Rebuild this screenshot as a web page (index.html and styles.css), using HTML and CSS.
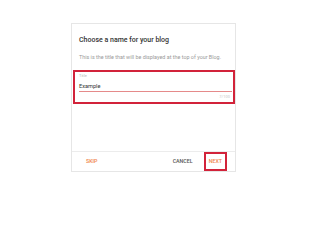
FILE: index.html
```html
<!DOCTYPE html>
<html>
<head>
<meta charset="utf-8">
<link rel="stylesheet" href="styles.css">
</head>
<body>
<div class="card">
  <div class="main">
    <div class="title">Choose a name for your blog</div>
    <div class="subtitle">This is the title that will be displayed at the top of your Blog.</div>
    <div class="field">
      <div class="label">Title</div>
      <div class="input">Example</div>
      <div class="counter">7/100</div>
    </div>
  </div>
  <div class="footer">
    <span class="btn skip">SKIP</span>
    <span class="spacer"></span>
    <span class="btn cancel">CANCEL</span>
    <span class="btn next">NEXT</span>
  </div>
</div>
</body>
</html>
```
FILE: styles.css
```css
html, body {
  margin: 0;
  padding: 0;
  background: #ffffff;
  font-family: Roboto, "Liberation Sans", sans-serif;
}
.card {
  margin: 23px 0 0 71px;
  width: 165px;
  height: 149px;
  box-sizing: border-box;
  border: 1px solid #e6e6e6;
  display: flex;
  flex-direction: column;
}
.main {
  height: 127px;
  box-sizing: border-box;
  padding: 11px 0 0 1px;
}
.title {
  font-size: 7px;
  line-height: 10px;
  font-weight: 500;
  color: #333333;
  padding-left: 6px;
  white-space: nowrap;
}
.subtitle {
  margin-top: 8px;
  font-size: 5.4px;
  line-height: 8px;
  color: #9a9a9a;
  padding-left: 6px;
  white-space: nowrap;
}
.field {
  margin-top: 9px;
  height: 34px;
  box-sizing: border-box;
  border: 2px solid #d2233a;
  padding: 1px 1px 0 4px;
}
.label {
  font-size: 4px;
  line-height: 5px;
  color: #b5b5b5;
}
.input {
  margin-top: 4px;
  font-size: 5.6px;
  line-height: 8px;
  color: #333333;
  border-bottom: 1px solid #e58a8a;
  padding-bottom: 1px;
}
.counter {
  margin-top: 2px;
  font-size: 4px;
  line-height: 5px;
  color: #c8c8c8;
  text-align: right;
  padding-right: 2px;
}
.footer {
  flex: 1;
  border-top: 1px solid #ececec;
  display: flex;
  align-items: center;
  padding: 0 8px 0 14px;
}
.spacer {
  flex: 1;
}
.btn {
  font-size: 5.3px;
  line-height: 7px;
  font-weight: 500;
}
.skip {
  color: #f0834a;
}
.cancel {
  color: #555555;
}
.next {
  color: #f0834a;
  margin-left: 11px;
  border: 2px solid #d2233a;
  padding: 4px 3px;
}
```
